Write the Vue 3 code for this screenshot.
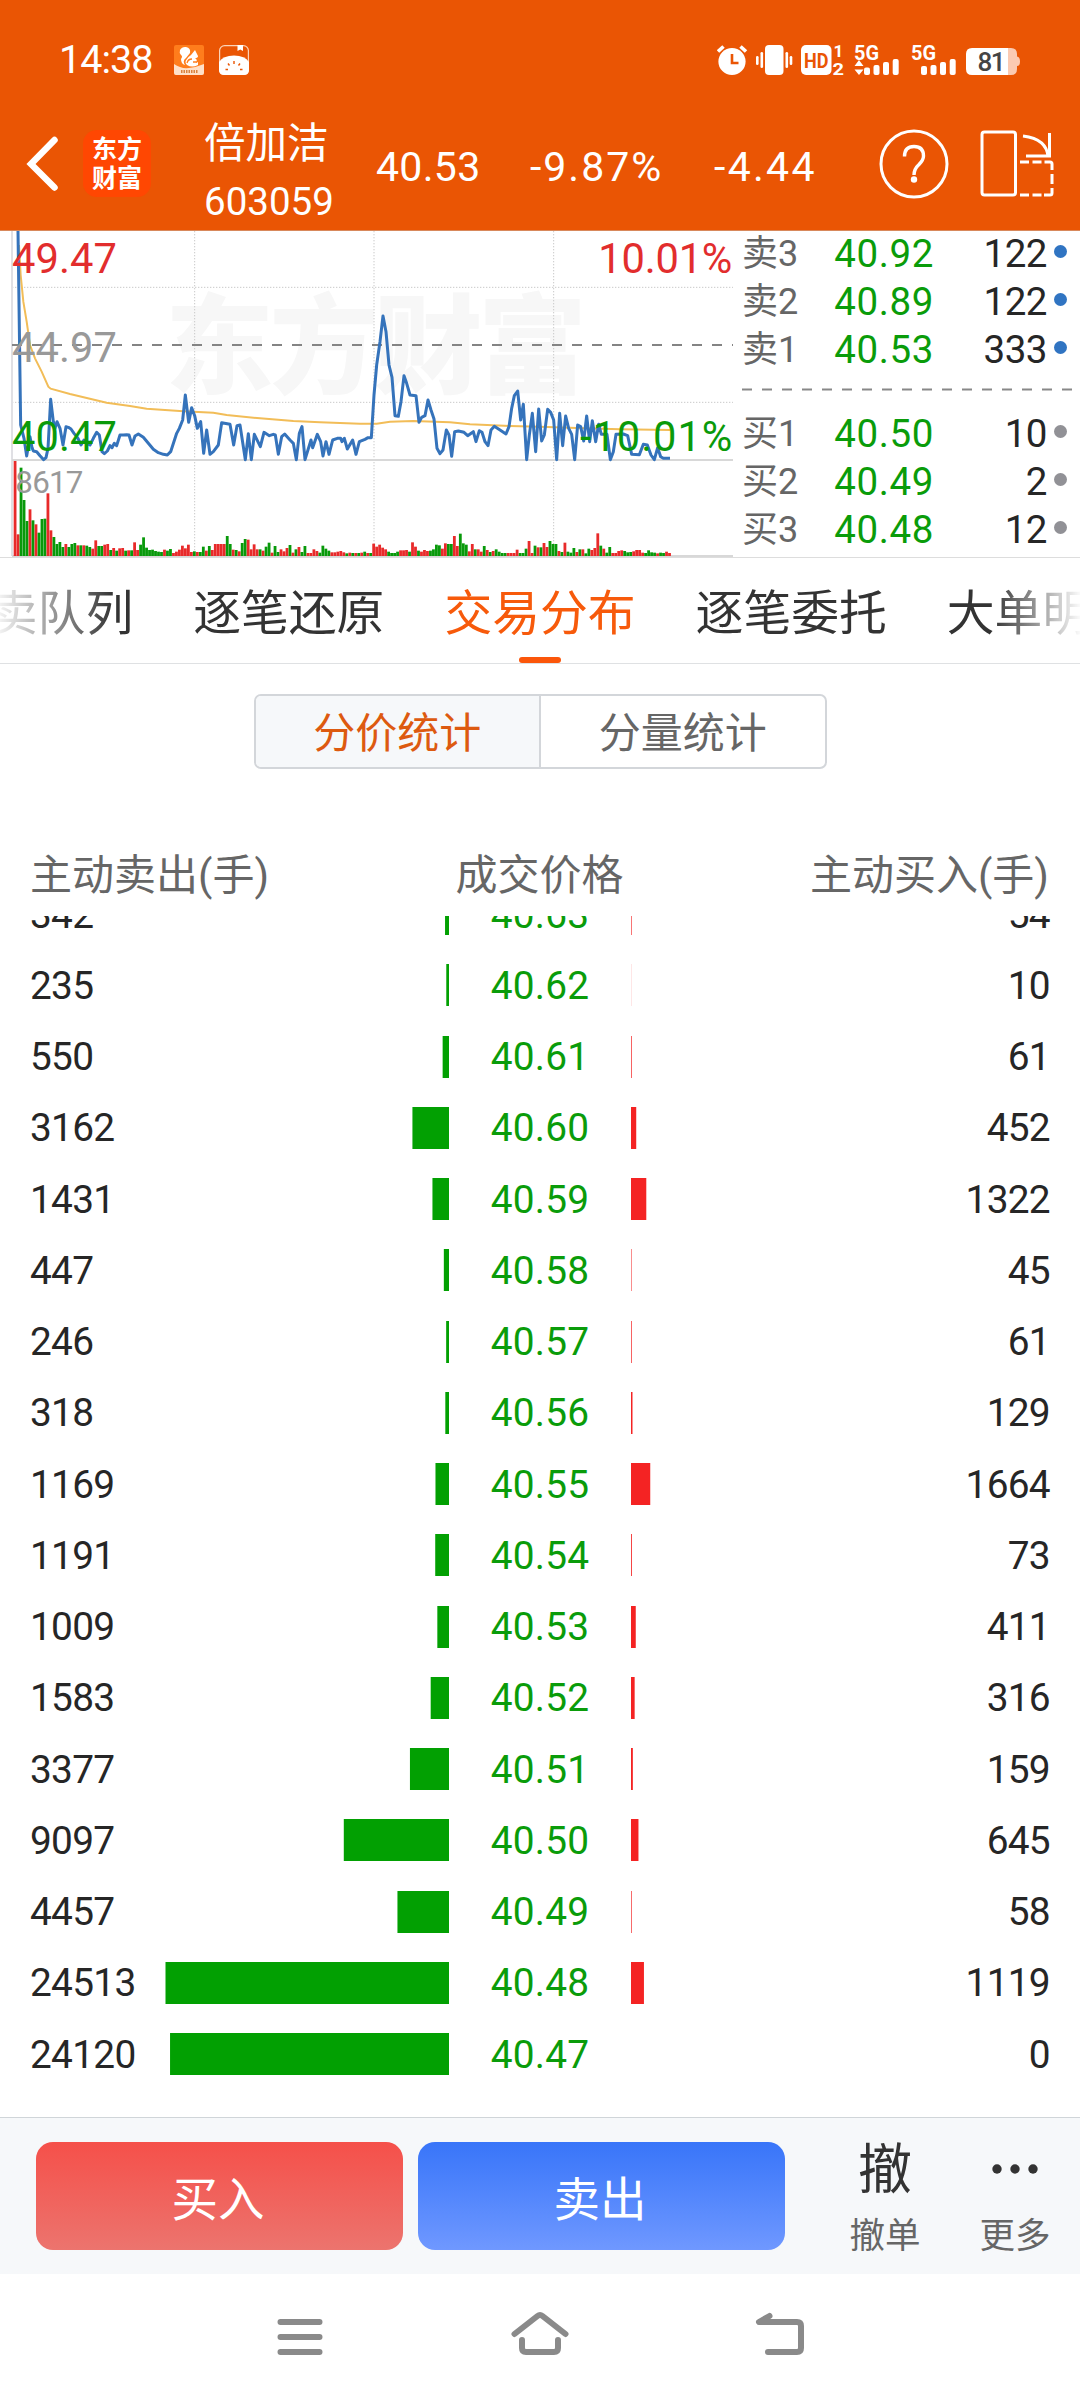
<script setup>
const pricePoints =
  '54,18 62,600 72,640 80,693 90,635 96,668 100,678 110,680 120,692 131,704 138,698 144,670 152,523 160,590 165,610 171,590 180,610 189,660 198,605 205,607 213,612 222,625 234,640 243,660 252,645 260,655 270,660 280,640 290,622 298,630 306,680 313,686 322,678 330,662 336,668 343,655 350,662 360,630 370,630 380,629 387,630 396,660 405,633 415,627 430,637 445,655 460,673 475,683 490,688 502,690 512,680 530,625 538,610 548,585 556,510 566,592 575,548 584,572 592,610 602,590 611,685 620,615 630,688 640,680 655,660 665,593 690,598 701,660 711,602 720,600 736,704 745,626 754,704 763,628 781,665 792,622 808,632 820,628 826,630 835,688 845,635 854,627 870,645 880,655 889,704 898,625 906,605 915,704 933,645 938,668 952,628 962,650 969,693 978,650 987,688 998,645 1012,640 1022,640 1026,650 1033,640 1042,672 1058,645 1068,688 1078,650 1095,643 1104,638 1114,638 1122,510 1130,420 1140,350 1149,273 1158,320 1167,420 1176,457 1185,572 1195,574 1203,530 1212,452 1220,475 1230,510 1248,512 1257,592 1265,577 1275,572 1284,525 1293,555 1302,582 1311,670 1320,686 1329,675 1339,615 1347,630 1355,694 1364,620 1375,618 1392,622 1403,632 1420,620 1428,650 1438,617 1446,622 1455,650 1464,662 1473,615 1483,604 1500,615 1518,627 1527,605 1535,550 1543,512 1553,498 1562,585 1570,538 1580,704 1588,630 1597,565 1607,680 1616,552 1625,648 1633,630 1643,553 1652,562 1661,585 1670,704 1679,565 1688,662 1697,573 1706,610 1715,628 1724,704 1733,600 1742,605 1751,648 1760,573 1769,650 1777,587 1787,650 1796,598 1804,628 1821,628 1831,704 1840,680 1848,628 1870,627 1883,632 1895,688 1918,689 1930,658 1942,660 1953,690 1963,704 1973,668 1982,695 1990,700 2010,700'

const averagePoints =
  '57,60 62,150 70,230 80,290 90,360 105,400 125,440 145,485 152,491 210,507 320,533 390,543 440,551 550,559 640,563 680,570 780,580 880,588 960,592 1080,596 1130,596 1170,590 1240,588 1350,592 1410,598 1530,603 1620,605 1730,609 1860,613 2010,615'

const volumes = (
  'r285 r65 g265 g168 g105 r140 g107 r95 g70 g111 g112 r188 r77 g57 g36 g42 g27 r36 g27 g36 g39 r32 g32 r32 g31 g27 r22 r47 g30 g30 ' +
  'r34 r36 g18 r24 g16 r23 r24 g16 r17 g17 r41 r18 g34 g56 g25 g18 g19 g15 g13 g12 r19 g16 g21 r9 r13 r19 r31 r23 r34 r12 ' +
  'g14 r12 g12 g28 r16 g30 r18 r36 r36 r36 r36 g60 g36 r19 g18 r14 g39 g51 r49 r20 r35 r20 g20 r16 g28 g40 r10 g30 g12 r20 ' +
  'r14 r24 g33 r10 g20 r27 g12 g30 r9 r9 r20 r15 g10 g31 g22 g16 r11 r11 r13 r15 r11 g8 r10 g9 r9 g9 r10 g13 r9 g9 ' +
  'r37 r28 r34 r25 r20 g13 g9 g9 g13 r17 r17 r18 g13 r41 r28 g16 r13 r18 r15 g16 g20 g34 g32 r22 r38 g36 g36 r60 r30 g67 ' +
  'g38 g34 r14 r36 g20 r20 r13 g30 r18 g12 r15 g20 g13 g9 g9 r9 r9 r9 r19 g9 g9 g22 r45 r9 g31 r26 g26 r39 r27 g45 ' +
  'g36 g36 r15 g12 r40 g13 g10 g24 r12 g20 r20 g8 g22 r18 r24 r68 g31 r22 g10 g27 r9 r9 r15 r17 g15 g11 g12 r14 r18 r18 ' +
  'r10 g9 g17 g11 g10 r8 g10 g9 r13 r9'
)
  .split(' ')
  .map((token) => ({ up: token[0] === 'r', height: Number(token.slice(1)) }))

const asks = [
  { label: '卖3', price: '40.92', qty: 122 },
  { label: '卖2', price: '40.89', qty: 122 },
  { label: '卖1', price: '40.53', qty: 333 },
]
const bids = [
  { label: '买1', price: '40.50', qty: 10 },
  { label: '买2', price: '40.49', qty: 2 },
  { label: '买3', price: '40.48', qty: 12 },
]

const tabs = ['买卖队列', '逐笔还原', '交易分布', '逐笔委托', '大单明细']
const activeTab = '交易分布'

const rows = [
  [342, '40.63', 54],
  [235, '40.62', 10],
  [550, '40.61', 61],
  [3162, '40.60', 452],
  [1431, '40.59', 1322],
  [447, '40.58', 45],
  [246, '40.57', 61],
  [318, '40.56', 129],
  [1169, '40.55', 1664],
  [1191, '40.54', 73],
  [1009, '40.53', 411],
  [1583, '40.52', 316],
  [3377, '40.51', 159],
  [9097, '40.50', 645],
  [4457, '40.49', 58],
  [24513, '40.48', 1119],
  [24120, '40.47', 0],
].map(([sell, price, buy]) => ({ sell, price, buy }))

const maxBar = 283.5
const maxVolume = Math.max(...rows.map((r) => Math.max(r.sell, r.buy)))
const barWidth = (v) => (v / maxVolume) * maxBar
</script>

<template>
  <div class="screen">
    <header class="top">
      <div class="status">
        <span class="time">14:38</span>
        <svg class="note-a" width="30" height="30" viewBox="0 0 30 30">
          <rect width="30" height="30" rx="2" fill="#ff7d1c" />
          <path d="M0 19 Q7 24 15 23 T30 19 V28 Q30 30 28 30 H2 Q0 30 0 28Z" fill="#ffe0c8" />
          <path d="M6 5 Q8 1.500 12 2 Q17 3 16 8 L12 13 Q8 16 11 20 Q7 19 7 14 Q9 11 7 10 Q5 8 6 5Z M17 10 L21 5 L24 11 Q24 13 21 13 Q24 15 22 18 L24 17 V20 Q18 23 13 20 Q10 17 13 14 Q14 12 17 10Z" fill="#fff" />
          <path d="M13 18 Q14 14 18 14 M19 17 H23" stroke="#ff7d1c" stroke-width="1.300" fill="none" />
          <path d="M7 26.500 H24" stroke="#d9823f" stroke-width="3" stroke-dasharray="1.500 1" />
        </svg>
        <svg class="note-b" width="30" height="30" viewBox="0 0 30 30">
          <rect x="0.600" y="0.600" width="28.800" height="28.800" rx="5" fill="none" stroke="#fbd3b8" stroke-width="1.200" />
          <path d="M18.500 0 H24 V6 L21.200 4.500 L18.500 6Z" fill="#fff" />
          <path d="M0 17 Q4 10.500 15 10.500 T30 17 V25 Q30 30 25 30 H5 Q0 30 0 25Z" fill="#fff" />
          <path d="M15 16 V19 M9 18.500 L10.500 20.500 M21 18.500 L19.500 20.500 M6.500 24.500 H9 M21 24.500 H23.500" stroke="#ea5504" stroke-width="1.400" />
        </svg>
        <svg class="status-icons" width="304" height="34" viewBox="717 43 304 34">
          <g fill="#fff">
            <circle cx="732" cy="61.500" r="13.600" />
            <path d="M718 51.500 L723.500 46.500 M746 51.500 L740.500 46.500" stroke="#fff" stroke-width="3.600" />
            <path d="M732 54 V63 H738.500" fill="none" stroke="#ea5504" stroke-width="2.600" />
            <rect x="765" y="45" width="18.500" height="30" rx="4" />
            <rect x="760.500" y="52" width="2.600" height="16" rx="1.300" />
            <rect x="756" y="56" width="2.600" height="9" rx="1.300" />
            <rect x="785.500" y="52" width="2.600" height="16" rx="1.300" />
            <rect x="789.700" y="56" width="2.600" height="9" rx="1.300" />
            <rect x="801" y="45" width="30.500" height="30" rx="5" />
            <text x="804" y="67.500" class="bold" font-size="21" textLength="24.500" lengthAdjust="spacingAndGlyphs" style="fill: #ea5504">HD</text>
            <text x="833.500" y="57" class="bold" font-size="17">1</text>
            <text x="832.500" y="75" class="bold" font-size="17" textLength="11.500" lengthAdjust="spacingAndGlyphs">2</text>
            <text x="854" y="59.500" class="bold" font-size="19.500" textLength="25" lengthAdjust="spacingAndGlyphs">5G</text>
            <path d="M859 60 L863.500 66 H854.500Z M859 75 L863.500 69.500 H854.500Z" />
            <rect x="864" y="67.500" width="6" height="7.500" rx="2" />
            <rect x="873.500" y="65" width="6" height="10" rx="2" />
            <rect x="883" y="62" width="6" height="13" rx="2" />
            <rect x="892.700" y="59" width="6" height="16" rx="2" />
            <text x="911" y="59.500" class="bold" font-size="19.500" textLength="25" lengthAdjust="spacingAndGlyphs">5G</text>
            <rect x="921" y="66" width="6" height="9" rx="2" />
            <rect x="930.500" y="65" width="6" height="10" rx="2" />
            <rect x="940" y="62" width="6" height="13" rx="2" />
            <rect x="949.700" y="59" width="6" height="16" rx="2" />
            <path d="M1008 48 H1011 Q1017 48 1017 54 V56.500 Q1020 57 1020 61.500 T1017 66 V69 Q1017 75 1011 75 H1008Z" fill="#fbcab2" />
            <path d="M972 48 H1008 V75 H972 Q966 75 966 69 V54 Q966 48 972 48Z" />
            <text x="977.500" y="70.500" class="medium" font-size="26" textLength="28" style="fill: #444">81</text>
          </g>
        </svg>
      </div>
      <div class="bar">
        <svg class="back" width="34" height="56" viewBox="0 0 34 56">
          <path d="M29.500 4 L6 28 L29.500 51.500" fill="none" stroke="#fff" stroke-width="6.500" stroke-linecap="round" />
        </svg>
        <div class="brand"><span>东方</span><span>财富</span></div>
        <div class="stock">
          <span class="name">倍加洁</span>
          <span class="code">603059</span>
        </div>
        <span class="quote last">40.53</span>
        <span class="quote pct">-9.87%</span>
        <span class="quote diff">-4.44</span>
        <svg class="help" width="70" height="70" viewBox="0 0 70 70">
          <circle cx="35" cy="35" r="33" fill="none" stroke="#fff" stroke-width="3" />
          <path d="M25.500 27.500 Q25.500 17.500 35 17.500 T44.500 27 Q44.500 31 40 35.500 Q35 40 35 46" fill="none" stroke="#fff" stroke-width="3.400" />
          <circle cx="35" cy="50.500" r="3.200" fill="#fff" />
        </svg>
        <svg class="rotate" width="74" height="68" viewBox="0 0 74 68">
          <g fill="none" stroke="#fff" stroke-width="3">
            <rect x="2" y="2" width="33.500" height="63" rx="2.500" />
            <path d="M43 6 Q67 9 68 27" />
            <path d="M69.500 3 V26 H46" />
            <path d="M40 32 H49 M52.500 32 H61.500 M64.500 32 H70 Q72 32 72 34 V40 M72 44 V54 M72 58 V63 Q72 65 70 65 H64 M61.500 65 H52.500 M49 65 H40" />
          </g>
        </svg>
      </div>
    </header>

    <section class="market">
      <svg class="chart" width="740" height="326" viewBox="0 18 2220 978">
        <text x="496" y="480" class="watermark" textLength="1264">东方财富</text>
        <g fill="none" stroke="#c9c9c9" stroke-width="3" stroke-dasharray="4 5">
          <path d="M584 18 V993 M1122 18 V993 M1661 18 V993 M36 187 H2199 M36 532 H2199" />
        </g>
        <path d="M36 18 V993" stroke="#e0e0e4" stroke-width="6" />
        <path d="M36 705 H2199 M36 993 H2199" stroke="#d8d8d8" stroke-width="6" />
        <path d="M36 360 H2199" stroke="#848484" stroke-width="6" stroke-dasharray="30 30" />
        <g>
          <rect
            v-for="(v, i) in volumes"
            :key="i"
            :x="41 + i * 8.965"
            :y="993 - v.height"
            width="8.400"
            :height="v.height"
            :fill="v.up ? '#e82a2a' : '#08990a'"
          />
        </g>
        <polyline :points="averagePoints" fill="none" stroke="#f2bd58" stroke-width="6" />
        <polyline :points="pricePoints" fill="none" stroke="#3573bb" stroke-width="9" stroke-linejoin="round" />
        <g class="axis">
          <text x="36" y="144" textLength="315" fill="#e22d2d">49.47</text>
          <text x="36" y="411" textLength="315" fill="#999">44.97</text>
          <text x="36" y="678" textLength="315" fill="#0a9a0a">40.47</text>
          <text x="1795" y="144" textLength="402" fill="#e22d2d">10.01%</text>
          <text x="1740" y="678" textLength="457" fill="#0a9a0a">-10.01%</text>
          <text x="46" y="805" textLength="204" fill="#999" class="small">8617</text>
        </g>
      </svg>
      <div class="book">
        <div v-for="o in asks" :key="o.label" class="order">
          <span class="side">{{ o.label }}</span>
          <span class="price">{{ o.price }}</span>
          <span class="qty">{{ o.qty }}</span>
          <i class="dot ask"></i>
        </div>
        <svg class="split" width="331" height="36" viewBox="0 0 331 36">
          <path d="M0 15.500 H331" stroke="#888" stroke-width="2" stroke-dasharray="10 10" />
        </svg>
        <div v-for="o in bids" :key="o.label" class="order">
          <span class="side">{{ o.label }}</span>
          <span class="price">{{ o.price }}</span>
          <span class="qty">{{ o.qty }}</span>
          <i class="dot bid"></i>
        </div>
      </div>
    </section>

    <nav class="tabs">
      <div class="track">
        <span v-for="t in tabs" :key="t" class="tab" :class="{ active: t === activeTab }">{{ t }}</span>
      </div>
    </nav>

    <div class="segment">
      <span class="seg on">分价统计</span>
      <span class="seg">分量统计</span>
    </div>

    <div class="columns">
      <span>主动卖出(手)</span>
      <span>成交价格</span>
      <span>主动买入(手)</span>
    </div>

    <div class="list">
      <div class="inner">
        <div v-for="r in rows" :key="r.price" class="row">
          <span class="vol">{{ r.sell }}</span>
          <svg class="hbar" width="290" height="42" viewBox="0 0 290 42">
            <rect :x="290 - barWidth(r.sell)" y="0" :width="barWidth(r.sell)" height="42" fill="#02a002" />
          </svg>
          <span class="deal">{{ r.price }}</span>
          <svg class="hbar" width="290" height="42" viewBox="0 0 290 42">
            <rect x="0" y="0" :width="barWidth(r.buy)" height="42" fill="#f42323" />
          </svg>
          <span class="vol right">{{ r.buy }}</span>
        </div>
      </div>
    </div>

    <footer class="actions">
      <button class="btn buy">买入</button>
      <button class="btn sell">卖出</button>
      <div class="tool cancel">
        <span class="glyph">撤</span>
        <span class="cap">撤单</span>
      </div>
      <div class="tool more">
        <svg class="glyph" width="50" height="56" viewBox="0 0 50 56">
          <g fill="#333">
            <circle cx="7" cy="28" r="4.700" />
            <circle cx="25" cy="28" r="4.700" />
            <circle cx="43" cy="28" r="4.700" />
          </g>
        </svg>
        <span class="cap">更多</span>
      </div>
    </footer>

    <div class="system">
      <svg width="60" height="50" viewBox="270 2309 60 50">
        <path d="M280.500 2322 H319.500 M280.500 2337 H319.500 M280.500 2352 H319.500" />
      </svg>
      <svg width="60" height="50" viewBox="510 2309 60 50">
        <path d="M514.500 2334 L537.500 2316 Q540 2314 542.500 2316 L565.500 2334 M522 2340 V2348 Q522 2352 526 2352 H554 Q558 2352 558 2348 V2340" />
      </svg>
      <svg width="60" height="50" viewBox="750 2309 60 50">
        <path d="M769.500 2316 L759 2322 H797 Q801 2322 801 2326 V2348 Q801 2352 797 2352 H768" />
      </svg>
    </div>
  </div>
</template>

<style>
body {
  margin: 0;
  background: #fff;
}
</style>

<style scoped>
.screen {
  width: 1080px;
  height: 2400px;
  overflow: hidden;
  display: flex;
  flex-direction: column;
  background: #fff;
  font-family: Roboto, 'Noto Sans CJK SC', sans-serif;
  color: #262626;
}
svg {
  display: block;
  flex: none;
}
.top {
  height: 230px;
  flex: none;
  border-bottom: 1px solid #d8895c;
  background: #ea5504;
  color: #fff;
}
.status {
  display: flex;
  align-items: center;
  height: 120px;
  padding: 0 59px;
}
.time {
  width: 115px;
  font-size: 39.500px;
  line-height: 48px;
  letter-spacing: -1px;
}
.note-b {
  margin-left: 15px;
}
.status-icons {
  margin-left: auto;
}
.bold {
  font-weight: 700;
}
.medium {
  font-weight: 500;
}
.bar {
  display: flex;
  align-items: center;
  height: 87px;
}
.back {
  margin-left: 25px;
}
.brand {
  display: flex;
  flex-direction: column;
  align-items: center;
  justify-content: center;
  width: 68px;
  height: 67px;
  margin-left: 24px;
  border-radius: 14px;
  background: #ff4702;
  font-size: 25px;
  line-height: 29px;
  font-weight: 700;
}
.stock {
  display: flex;
  flex-direction: column;
  width: 172px;
  margin: 17px 0 0 53px;
}
.name {
  font-size: 41.500px;
  line-height: 59px;
}
.code {
  font-size: 38.500px;
  line-height: 58px;
}
.quote {
  font-size: 41px;
  line-height: 50px;
  margin-top: 6px;
}
.last {
  width: 154px;
  letter-spacing: 0.300px;
}
.pct {
  width: 184px;
  letter-spacing: 2px;
}
.diff {
  width: 165px;
  letter-spacing: 2.300px;
}
.rotate {
  margin-left: 31px;
}
.market {
  display: flex;
  height: 326px;
  flex: none;
  border-bottom: 1px solid #ddd;
}
.watermark {
  font-family: 'Noto Sans CJK SC', sans-serif;
  font-weight: 900;
  font-size: 325px;
  fill: #f7f7f7;
}
.axis {
  font-size: 125px;
}
.small {
  font-size: 94px;
}
.book {
  flex: 1;
  margin-top: -1.500px;
  font-size: 38.500px;
}
.order {
  display: flex;
  align-items: center;
  height: 48px;
  line-height: 48px;
  padding: 0 13px 0 2px;
}
.side {
  width: 80px;
  font-size: 36px;
  color: #666;
}
.price {
  width: 112px;
  text-align: right;
  letter-spacing: 0.600px;
  color: #0a9c0a;
}
.qty {
  flex: 1;
  text-align: right;
  letter-spacing: -0.500px;
}
.dot {
  width: 13px;
  height: 13px;
  margin: 0 0 4px 7px;
  border-radius: 50%;
}
.ask {
  background: #3074c2;
}
.bid {
  background: #919196;
}
.split {
  margin-left: 2px;
}
.tabs {
  height: 105px;
  flex: none;
  overflow: hidden;
  border-bottom: 1px solid #dfe1e3;
}
.track {
  display: flex;
  justify-content: center;
  gap: 60px;
  height: 105px;
  margin: 0 -96px;
  -webkit-mask-image: linear-gradient(90deg, transparent 88px, #000 210px, #000 1088px, transparent 1178px);
  mask-image: linear-gradient(90deg, transparent 88px, #000 210px, #000 1088px, transparent 1178px);
}
.tab {
  display: flex;
  flex-direction: column;
  align-items: center;
  flex: none;
  font-size: 47.800px;
  line-height: 112px;
  color: #333;
}
.active {
  color: #f75a0b;
}
.active::after {
  content: '';
  width: 42px;
  height: 6px;
  margin-top: -13px;
  border-radius: 3px;
  background: #fb560a;
}
.segment {
  display: flex;
  flex: none;
  align-self: center;
  width: 569px;
  height: 71px;
  margin-top: 30px;
  border: 2px solid #d3d6da;
  border-radius: 7px;
  overflow: hidden;
  font-size: 42px;
  line-height: 76px;
  color: #666;
}
.seg {
  flex: 1;
  text-align: center;
}
.on {
  color: #dd5a10;
  background: #f6f8fa;
  border-right: 2px solid #d3d6da;
}
.columns {
  display: flex;
  flex: none;
  justify-content: space-between;
  height: 60px;
  margin-top: 77px;
  padding: 0 31px 0 30px;
  font-size: 42px;
  line-height: 60px;
  color: #666;
}
.list {
  height: 1201px;
  flex: none;
  margin-top: 10px;
  overflow: hidden;
}
.inner {
  margin-top: -37.500px;
}
.row {
  display: flex;
  align-items: center;
  height: 71.250px;
  padding: 0 30px;
  font-size: 38.800px;
}
.vol {
  width: 128.700px;
  white-space: nowrap;
  letter-spacing: -0.700px;
}
.right {
  text-align: right;
}
.deal {
  width: 182.600px;
  text-align: center;
  letter-spacing: 0.200px;
  color: #0a9c0a;
}
.vol,
.deal {
  flex: none;
}
.actions {
  display: flex;
  flex: none;
  height: 156px;
  border-top: 1px solid #d0d5d9;
  background: #f6f8fa;
}
.btn {
  width: 367px;
  height: 108px;
  margin: 24px 0 0 36px;
  padding: 0 3px 0 0;
  border: 0;
  border-radius: 17px;
  font: 46.500px/108px 'Noto Sans CJK SC', sans-serif;
  color: #fff;
}
.buy {
  background: linear-gradient(#f5504a, #ec746e);
}
.sell {
  margin-left: 15px;
  background: linear-gradient(#3875f9, #6f98ff);
}
.tool {
  display: flex;
  flex-direction: column;
  align-items: center;
  width: 80px;
}
.cancel {
  margin-left: 60px;
}
.more {
  margin-left: 50px;
}
.glyph {
  height: 56px;
  margin-top: 23px;
  font-size: 54px;
  line-height: 60px;
  color: #333;
}
.cap {
  margin-top: 14px;
  font-size: 35.500px;
  line-height: 50px;
  color: #666;
}
.system {
  display: flex;
  flex: 1;
  gap: 180px;
  justify-content: center;
  padding-top: 35px;
}
.system path {
  fill: none;
  stroke: #8a8a8a;
  stroke-width: 6;
  stroke-linecap: round;
  stroke-linejoin: round;
}
</style>
